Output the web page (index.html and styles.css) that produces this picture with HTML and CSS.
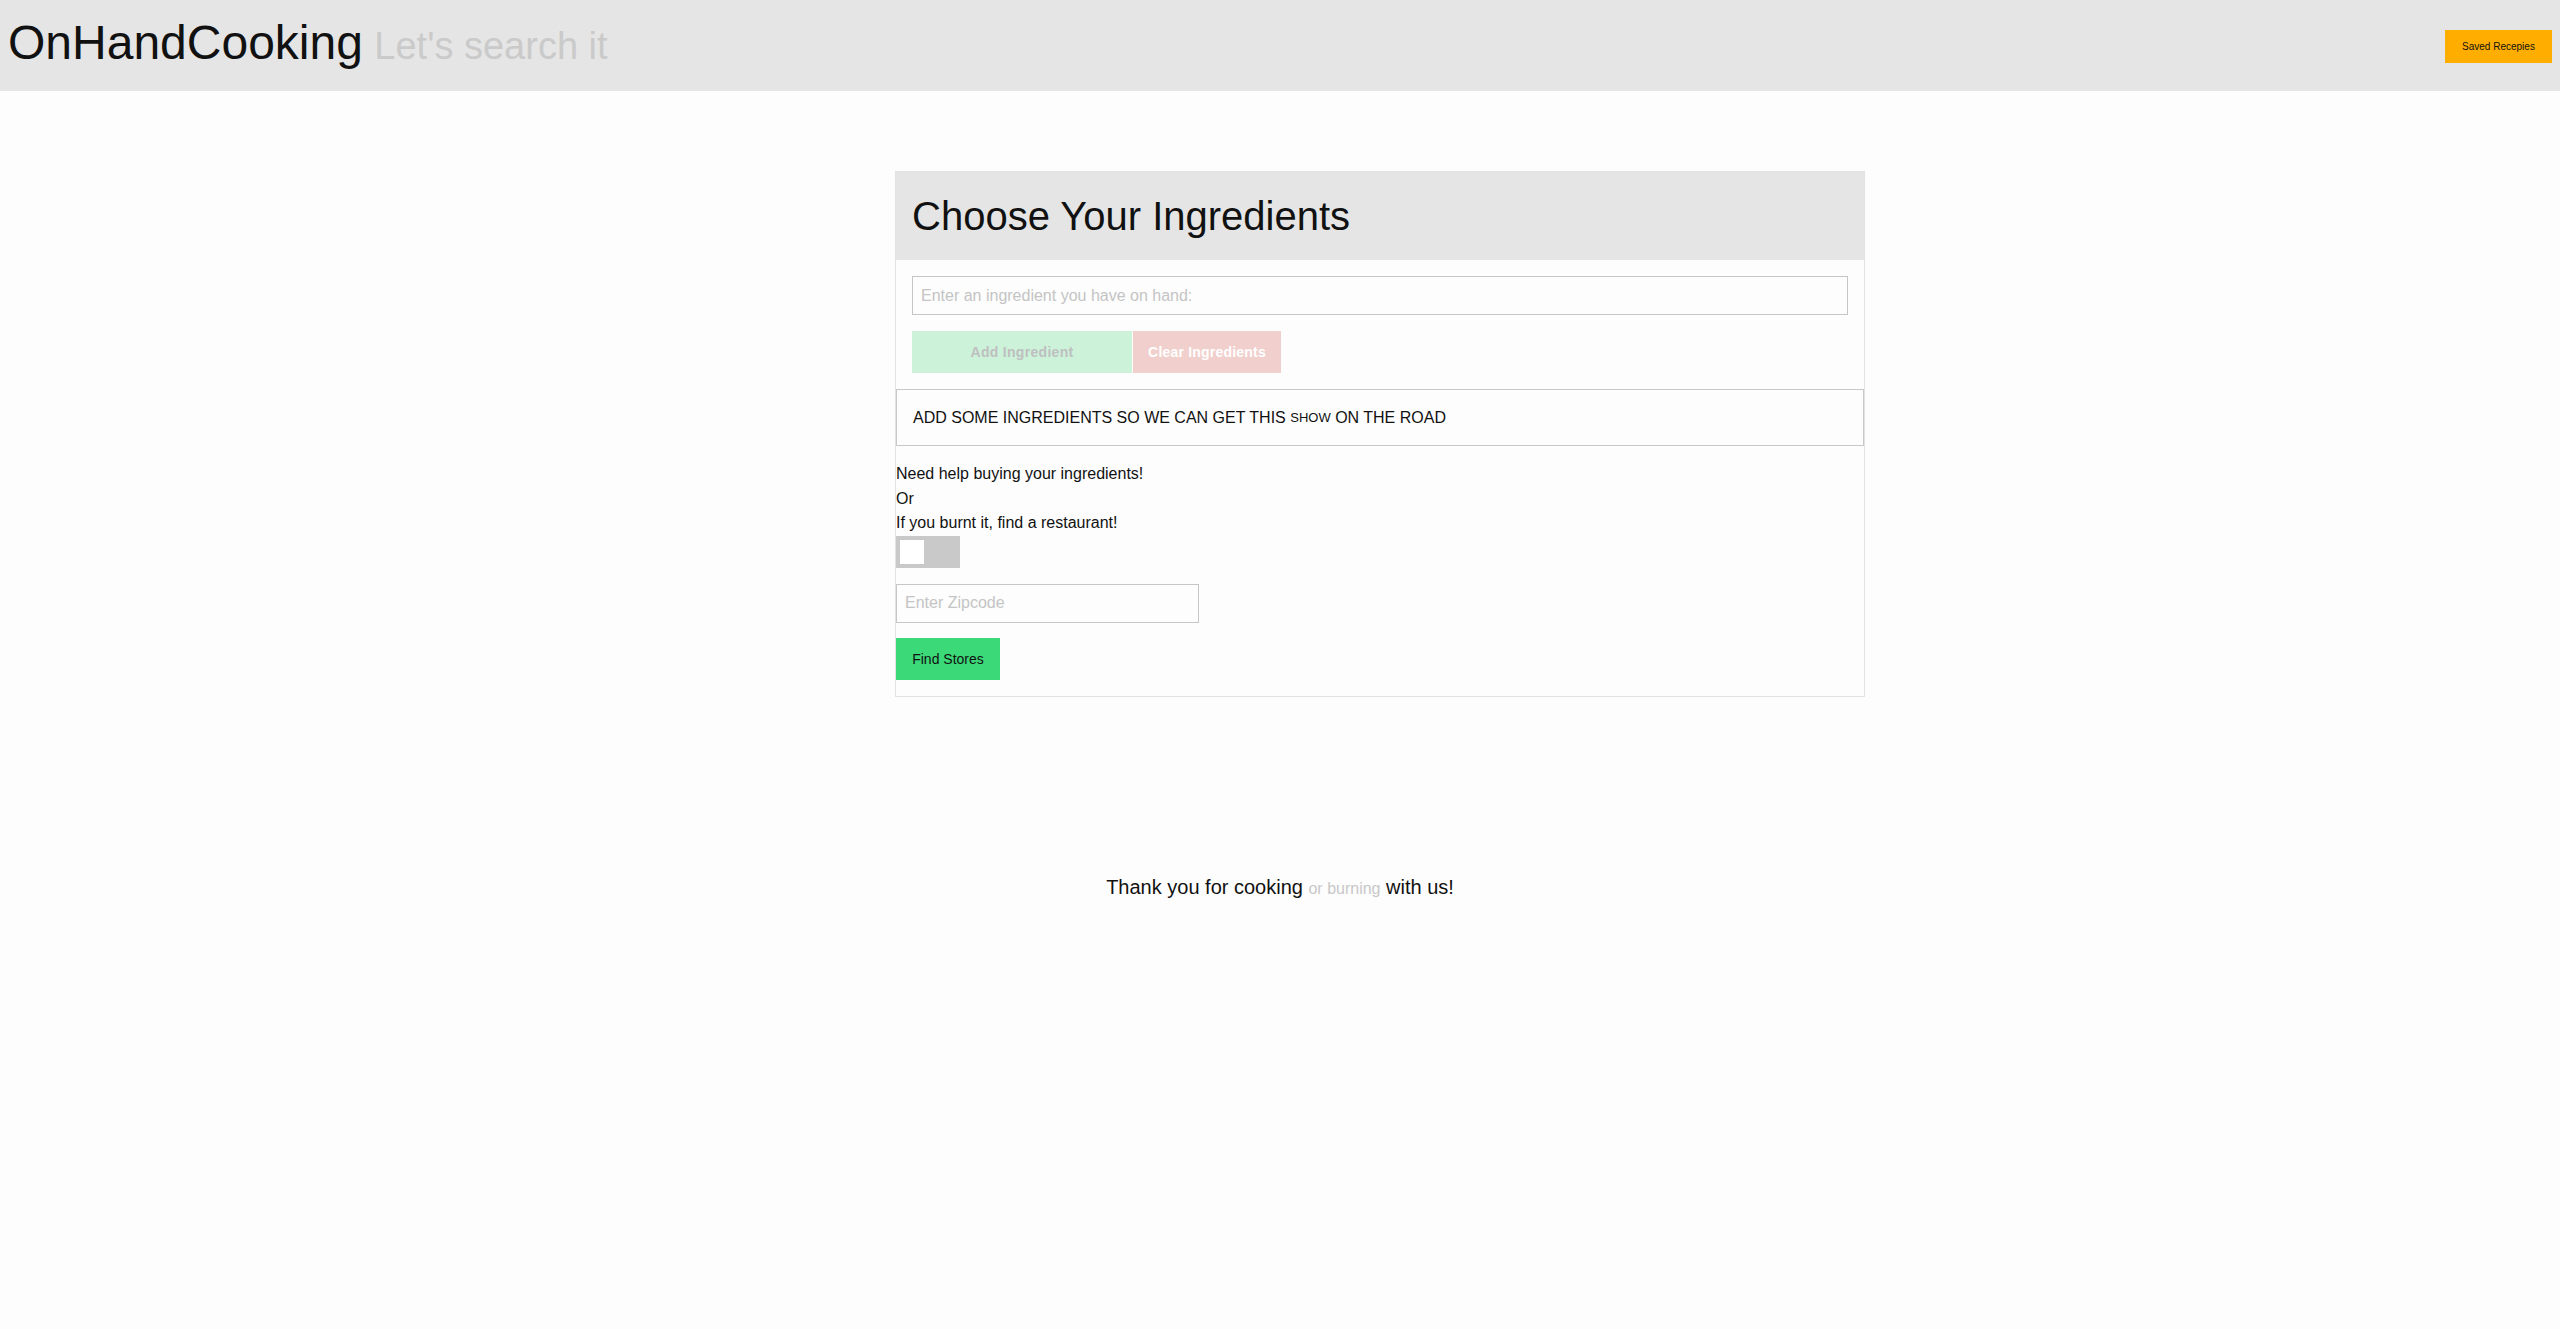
FILE: index.html
```html
<!DOCTYPE html>
<html lang="en">
<head>
<meta charset="utf-8">
<title>OnHandCooking</title>
<link rel="stylesheet" href="styles.css">
</head>
<body>
<header class="topbar">
  <div class="brand"><span class="brand-name">OnHandCooking</span> <span class="brand-tag">Let's search it</span></div>
  <button class="saved-btn">Saved Recepies</button>
</header>
<main class="page">
  <section class="card">
    <div class="card-head"><h2 class="card-title">Choose Your Ingredients</h2></div>
    <div class="card-form">
      <input class="field" type="text" placeholder="Enter an ingredient you have on hand:">
      <div class="btn-row">
        <button class="btn btn-add">Add Ingredient</button>
        <button class="btn btn-clear">Clear Ingredients</button>
      </div>
    </div>
    <div class="notice">Add some ingredients so we can get this <small>show</small> on the road</div>
    <div class="help">
      <div class="help-text">
        <div>Need help buying your ingredients!</div>
        <div>Or</div>
        <div>If you burnt it, find a restaurant!</div>
      </div>
      <label class="toggle"><span class="knob"></span></label>
      <input class="field zip" type="text" placeholder="Enter Zipcode">
      <button class="btn btn-find">Find Stores</button>
    </div>
  </section>
  <footer class="thanks">Thank you for cooking <span class="muted">or burning</span> with us!</footer>
</main>
</body>
</html>
```

FILE: styles.css
```css
* { box-sizing: border-box; }

body {
  margin: 0;
  background: #fdfdfd;
  font-family: "Liberation Sans", Arial, sans-serif;
  color: #111;
}

.topbar {
  height: 91px;
  background: #e5e5e5;
  display: flex;
  align-items: center;
  justify-content: space-between;
  padding: 0 8px;
}

.brand {
  align-self: flex-start;
  margin-top: 19px;
  line-height: 48px;
  white-space: nowrap;
}

.brand-name {
  font-size: 48px;
  color: #111;
}

.brand-tag {
  font-size: 38px;
  color: #cacaca;
  margin-left: 7px;
}

.saved-btn {
  width: 107px;
  height: 33px;
  border: none;
  background: #ffae00;
  font-family: "Liberation Sans", Arial, sans-serif;
  font-size: 10px;
  color: #111;
  padding: 0;
  margin-top: 1px;
  white-space: nowrap;
}

.page {
  display: grid;
  grid-template-columns: 895fr 970fr 695fr;
  padding-top: 80px;
}

.card {
  grid-column: 2;
  border: 1px solid #e2e2e2;
  background: #fdfdfd;
}

.card-head {
  height: 88px;
  background: #e5e5e5;
  display: flex;
  align-items: center;
  padding: 0 16px;
}

.card-title {
  margin: 0;
  font-size: 40px;
  font-weight: normal;
  color: #111;
  line-height: 46px;
}

.card-form {
  padding: 16px;
}

.field {
  display: block;
  width: 100%;
  height: 39px;
  border: 1px solid #c6c6c6;
  background: #fdfdfd;
  padding: 0 8px;
  font-family: "Liberation Sans", Arial, sans-serif;
  font-size: 16px;
  color: #333;
  outline: none;
}

.field::placeholder {
  color: #c4c4c4;
}

.btn-row {
  display: flex;
  gap: 1px;
  margin-top: 16px;
}

.btn {
  border: none;
  font-family: "Liberation Sans", Arial, sans-serif;
  font-size: 14px;
  height: 42px;
  padding: 0;
  white-space: nowrap;
}

.btn-add {
  width: 220px;
  background: #ccf2da;
  color: #bfbfbf;
  font-weight: bold;
  letter-spacing: 0.3px;
}

.btn-clear {
  width: 148px;
  background: #f0cfcc;
  color: #ffffff;
  font-weight: bold;
  letter-spacing: 0.2px;
}

.notice {
  height: 57px;
  border: 1px solid #c8c8c8;
  display: flex;
  align-items: center;
  padding: 0 16px;
  font-size: 16px;
  text-transform: uppercase;
  color: #111;
  white-space: pre;
}

.notice small {
  font-size: 13px;
}

.help {
  padding: 16px 0 16px;
  font-size: 16px;
}

.help-text {
  line-height: 24.5px;
}

.toggle {
  display: block;
  width: 64px;
  height: 32px;
  padding: 4px;
  background: #c9c9c9;
}

.knob {
  display: block;
  width: 24px;
  height: 24px;
  background: #ffffff;
}

.zip {
  width: 303px;
  margin-top: 16px;
}

.btn-find {
  display: block;
  margin-top: 15px;
  width: 104px;
  background: #3bd978;
  color: #111;
  font-weight: normal;
}

.thanks {
  grid-column: 1 / -1;
  text-align: center;
  margin-top: 179px;
  font-size: 20px;
  line-height: 23px;
  color: #111;
}

.muted {
  font-size: 16px;
  color: #c8c8c8;
}
```
